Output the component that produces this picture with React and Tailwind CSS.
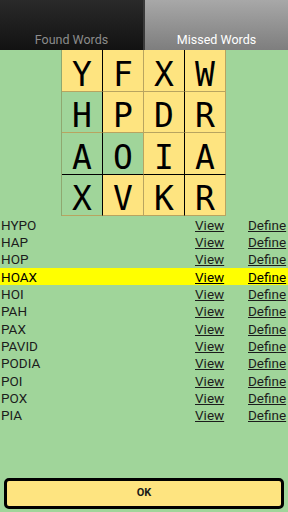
const board = [
  ['Y', 'F', 'X', 'W'],
  ['H', 'P', 'D', 'R'],
  ['A', 'O', 'I', 'A'],
  ['X', 'V', 'K', 'R'],
];

// cells that are part of the missed word (HOAX path)
const green = ['1-0', '2-0', '2-1', '3-0'];

const colBorder = ['border-r-black', 'border-r-[#b8a460]', 'border-r-black', 'border-r-[#b8a460]'];
const rowBorder = ['border-b-[#b8a460]', 'border-b-[#b8a460]', 'border-b-black', 'border-b-[#b8a460]'];

const words = ['HYPO', 'HAP', 'HOP', 'HOAX', 'HOI', 'PAH', 'PAX', 'PAVID', 'PODIA', 'POI', 'POX', 'PIA'];

export default function App() {
  return (
    <div className="w-[288px] h-[512px] flex flex-col bg-[#a0d59a] overflow-hidden" style={{ fontFamily: 'Roboto, "Liberation Sans", sans-serif' }}>
      <div className="flex h-[50px] shrink-0">
        <div className="w-[143px] flex items-end justify-center pb-[4px] leading-none bg-gradient-to-b from-[#2a2a2a] to-[#121212] text-[#8c8c8c] text-[12.5px]">
          Found Words
        </div>
        <div className="w-[2px] bg-[#3a3a3a]" />
        <div className="flex-1 flex items-end justify-center pb-[4px] leading-none bg-gradient-to-b from-[#a8a8a8] to-[#7e7e7e] text-white text-[12.5px]">
          Missed Words
        </div>
      </div>

      <div className="self-center ml-[-1px] grid grid-cols-4 border-l border-l-[#8fa870]" style={{ fontFamily: '"DejaVu Sans Mono", monospace' }}>
        {board.map((row, r) =>
          row.map((ch, c) => (
            <div
              key={r + '-' + c}
              className={
                'w-[41px] h-[41.5px] flex items-center justify-center text-[33px] leading-none text-black border-r border-b ' +
                colBorder[c] + ' ' + rowBorder[r] + ' ' +
                (green.includes(r + '-' + c) ? 'bg-[#a0d59a]' : 'bg-[#fee480]')
              }
            >
              <span className="pt-[8px]">{ch}</span>
            </div>
          ))
        )}
      </div>

      <div className="flex flex-col">
        {words.map((w) => (
          <div key={w} className={'h-[17.33px] flex items-center text-[13.5px] text-[#1c1c1c] ' + (w === 'HOAX' ? 'bg-[#ffff00] text-black' : '')}>
            <span className="pl-[1px] flex-1">{w}</span>
            <span className="w-[53px] underline">View</span>
            <span className="w-[40px] underline">Define</span>
          </div>
        ))}
      </div>

      <div className="flex-1" />

      <div className="px-[4px] pb-[3px]">
        <button className="w-full h-[31px] rounded-[5px] border-[3px] border-black bg-[#fee480] text-[11px] font-bold text-[#1a1a1a]">
          OK
        </button>
      </div>
    </div>
  );
}
